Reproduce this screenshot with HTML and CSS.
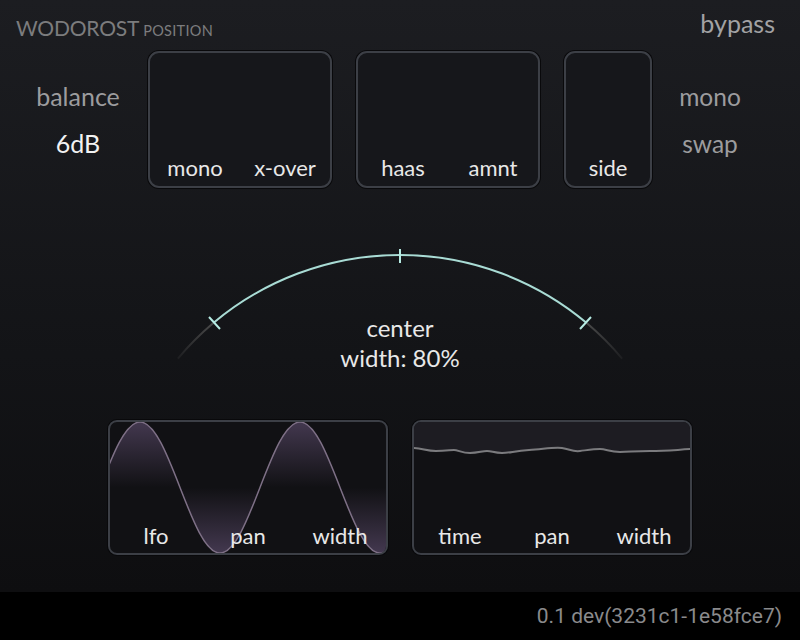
FILE: index.html
```html
<!DOCTYPE html>
<html>
  <head>
    <title>Wodorost Position</title>
    <link rel="stylesheet" href="styles.css">
  </head>
  <body>
    <div class="app">
      <main class="panel">
        <header class="topbar">
          <div class="brand">
            <span class="brand-name">WODOROST</span>
            <span class="brand-sub">POSITION</span>
          </div>
          <span class="bypass">bypass</span>
        </header>

        <section class="controls">
          <div class="side-col">
            <span class="side-label">balance</span>
            <span class="side-value">6dB</span>
          </div>
          <div class="pad pad-wide"><span>mono</span><span>x-over</span></div>
          <div class="pad pad-wide"><span>haas</span><span>amnt</span></div>
          <div class="pad pad-narrow"><span>side</span></div>
          <div class="side-col">
            <span class="side-label">mono</span>
            <span class="side-label">swap</span>
          </div>
        </section>

        <section class="stereo">
          <!-- stereo width arc, circle centre (240,305) r=290 -->
          <svg class="arc" width="480" height="140" viewBox="0 0 480 140">
            <defs>
              <linearGradient id="fadeLeft" gradientUnits="userSpaceOnUse" x1="18" y1="118" x2="54" y2="83">
                <stop offset="0" stop-color="#4a4a4a" stop-opacity="0.2" />
                <stop offset="1" stop-color="#4a4a4a" />
              </linearGradient>
              <linearGradient id="fadeRight" gradientUnits="userSpaceOnUse" x1="462" y1="118" x2="426" y2="83">
                <stop offset="0" stop-color="#4a4a4a" stop-opacity="0.2" />
                <stop offset="1" stop-color="#4a4a4a" />
              </linearGradient>
            </defs>
            <path d="M 17.9 118.6 A 290 290 0 0 1 53.6 82.8" fill="none" stroke="url(#fadeLeft)" stroke-width="2" />
            <path d="M 426.4 82.8 A 290 290 0 0 1 462.1 118.6" fill="none" stroke="url(#fadeRight)" stroke-width="2" />
            <path d="M 53.6 82.8 A 290 290 0 0 1 426.4 82.8" fill="none" stroke="#a9dcd5" stroke-width="2" />
            <path d="M 49 77 L 60 89 M 431 77 L 420 89 M 240 9 L 240 23" stroke="#b6ebe3" stroke-width="2" />
          </svg>
          <div class="readout">
            <span>center</span>
            <span>width: 80%</span>
          </div>
        </section>

        <section class="graphs">
          <div class="graph">
            <svg class="graph-plot" viewBox="0 0 276 131" preserveAspectRatio="none">
              <defs>
                <linearGradient id="lfoFill" x1="0" y1="0" x2="0" y2="1">
                  <stop offset="0" stop-color="#43384f" />
                  <stop offset="0.5" stop-color="#43384f" stop-opacity="0" />
                  <stop offset="1" stop-color="#43384f" />
                </linearGradient>
              </defs>
              <path d="M -50 131 C -20.9 131 0.9 0 30 0 S 80.9 131 110 131 S 160.9 0 190 0 S 240.9 131 270 131 S 320.9 0 350 0 L 350 65.5 L -50 65.5 Z" fill="url(#lfoFill)" />
              <path d="M -50 131 C -20.9 131 0.9 0 30 0 S 80.9 131 110 131 S 160.9 0 190 0 S 240.9 131 270 131 S 320.9 0 350 0" fill="none" stroke="#7e7086" stroke-width="1.5" />
            </svg>
            <div class="graph-labels"><span>lfo</span><span>pan</span><span>width</span></div>
          </div>
          <div class="graph">
            <svg class="graph-plot" viewBox="0 0 276 131" preserveAspectRatio="none">
              <path d="M -2 26 C 8 26 12 29 22 29 S 36 28 40 28 S 48 31 56 31 S 68 29 73 29 S 80 31 88 31 S 100 29 115 28 S 140 25 148 26 S 158 30 166 29 S 180 27 186 27 S 196 30 206 30 S 220 29 236 29 S 260 28 278 27 L 278 -2 L -2 -2 Z" fill="#1d1c22" />
              <path d="M -2 26 C 8 26 12 29 22 29 S 36 28 40 28 S 48 31 56 31 S 68 29 73 29 S 80 31 88 31 S 100 29 115 28 S 140 25 148 26 S 158 30 166 29 S 180 27 186 27 S 196 30 206 30 S 220 29 236 29 S 260 28 278 27" fill="none" stroke="#7b7b7e" stroke-width="2" stroke-linejoin="round" />
            </svg>
            <div class="graph-labels"><span>time</span><span>pan</span><span>width</span></div>
          </div>
        </section>
      </main>

      <footer class="version">0.1 dev(3231c1-1e58fce7)</footer>
    </div>
  </body>
</html>
```

FILE: styles.css
```css
body {
  margin: 0;
  background-color: #000;
  font-family: "Lato", "Open Sans", sans-serif;
}

.app {
  width: 800px;
  height: 640px;
  display: flex;
  flex-direction: column;
  overflow: hidden;
}

.panel {
  height: 592px;
  display: flex;
  flex-direction: column;
  background: linear-gradient(180deg, #1c1d21 0%, #131417 60%, #0e0e10 100%);
}

.topbar {
  height: 51px;
  box-sizing: border-box;
  padding: 8px 25px 0 16px;
  display: flex;
  justify-content: space-between;
  align-items: flex-start;
}

.brand {
  display: flex;
  align-items: baseline;
  gap: 4px;
  margin-top: 7px;
  color: #7c7c7e;
}

.brand-name {
  font-size: 21px;
  letter-spacing: -0.2px;
}

.brand-sub {
  font-size: 14.5px;
  letter-spacing: 0.3px;
}

.bypass {
  font-size: 25px;
  color: #a2a2a4;
}

.controls {
  height: 137px;
  display: flex;
  gap: 24px;
  padding-left: 8px;
}

.side-col {
  width: 140px;
  display: flex;
  flex-direction: column;
  justify-content: center;
  align-items: center;
  font-size: 25px;
  line-height: 47px;
}

.controls .side-col:first-child {
  margin-right: -24px;
}

.controls .side-col:last-child {
  width: 116px;
  margin-left: -24px;
  font-size: 24.5px;
}

.side-label {
  color: #9c9c9e;
}

.side-value {
  color: #f2f2f2;
}

.pad {
  box-sizing: border-box;
  height: 137px;
  border: 2px solid #3c3f46;
  border-radius: 11px;
  background-color: #16171b;
  box-shadow: 0 0 0 1px #09090b;
  display: flex;
  align-items: flex-end;
  padding-bottom: 4px;
  color: #e8e8e8;
  font-size: 22px;
  line-height: 28px;
}

.pad span {
  flex: 1;
  text-align: center;
}

.pad-wide {
  width: 184px;
}

.pad-narrow {
  width: 88px;
}

.stereo {
  height: 232px;
  display: grid;
  justify-items: center;
  align-items: start;
}

.arc,
.readout {
  grid-area: 1 / 1;
}

.arc {
  display: block;
  margin-top: 52px;
}

.readout {
  margin-top: 125px;
  display: flex;
  flex-direction: column;
  align-items: center;
  color: #e8e8e8;
  font-size: 24px;
  line-height: 30px;
}

.graphs {
  display: flex;
  justify-content: center;
  gap: 24px;
}

.graph {
  box-sizing: border-box;
  width: 280px;
  height: 135px;
  border: 2px solid #3c3f46;
  border-radius: 9px;
  background-color: #111114;
  box-shadow: 0 0 0 1px #09090b;
  overflow: hidden;
  display: grid;
}

.graph-plot,
.graph-labels {
  grid-area: 1 / 1;
}

.graph-plot {
  display: block;
  width: 276px;
  height: 131px;
}

.graph-labels {
  align-self: end;
  display: flex;
  padding-bottom: 3px;
  color: #e8e8e8;
  font-size: 22px;
  line-height: 28px;
}

.graph-labels span {
  flex: 1;
  text-align: center;
}

.version {
  height: 48px;
  box-sizing: border-box;
  padding-right: 18px;
  display: flex;
  justify-content: flex-end;
  align-items: center;
  background-color: #000;
  color: #8a8a8c;
  font-family: "Roboto", sans-serif;
  font-size: 21px;
}
```
